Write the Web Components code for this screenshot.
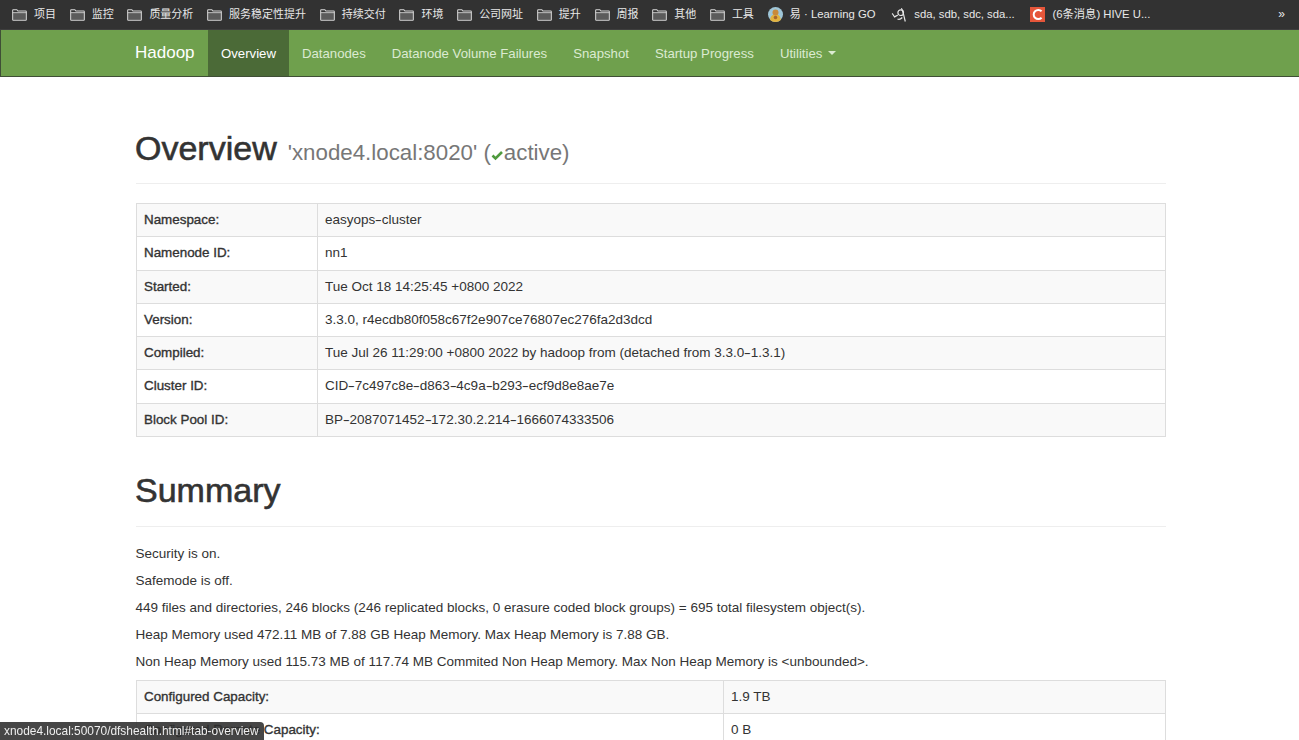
<!DOCTYPE html>
<html lang="en">
<head>
<meta charset="utf-8">
<title>Namenode information</title>
<style>
  html, body { margin: 0; height: 740px; overflow: hidden; background: #fff; }
  body { font: 13.5px/19px "Liberation Sans", "Noto Sans CJK SC", sans-serif; color: #333; }
</style>
</head>
<body>
<hd-bookmarks>
  <hd-bookmark>项目</hd-bookmark>
  <hd-bookmark>监控</hd-bookmark>
  <hd-bookmark>质量分析</hd-bookmark>
  <hd-bookmark>服务稳定性提升</hd-bookmark>
  <hd-bookmark>持续交付</hd-bookmark>
  <hd-bookmark>环境</hd-bookmark>
  <hd-bookmark>公司网址</hd-bookmark>
  <hd-bookmark>提升</hd-bookmark>
  <hd-bookmark>周报</hd-bookmark>
  <hd-bookmark>其他</hd-bookmark>
  <hd-bookmark>工具</hd-bookmark>
  <hd-bookmark icon="avatar">易 · Learning GO</hd-bookmark>
  <hd-bookmark icon="squiggle">sda, sdb, sdc, sda...</hd-bookmark>
  <hd-bookmark icon="csdn">(6条消息) HIVE U...</hd-bookmark>
</hd-bookmarks>
<hd-navbar brand="Hadoop">
  <hd-nav-item active>Overview</hd-nav-item>
  <hd-nav-item>Datanodes</hd-nav-item>
  <hd-nav-item>Datanode Volume Failures</hd-nav-item>
  <hd-nav-item>Snapshot</hd-nav-item>
  <hd-nav-item>Startup Progress</hd-nav-item>
  <hd-nav-item caret>Utilities</hd-nav-item>
</hd-navbar>
<hd-page>
  <hd-heading style="--top: 49px; --pad: 4px">Overview
    <span slot="sub">'xnode4.local:8020' (<hd-check></hd-check>active)</span>
  </hd-heading>
  <hd-kv-table col="181">
    <hd-kv name="Namespace:">easyops<i>-</i>cluster</hd-kv>
    <hd-kv name="Namenode ID:">nn1</hd-kv>
    <hd-kv name="Started:">Tue Oct 18 14:25:45 +0800 2022</hd-kv>
    <hd-kv name="Version:">3.3.0, r4ecdb80f058c67f2e907ce76807ec276fa2d3dcd</hd-kv>
    <hd-kv name="Compiled:">Tue Jul 26 11:29:00 +0800 2022 by hadoop from (detached from 3.3.0<i>-</i>1.3.1)</hd-kv>
    <hd-kv name="Cluster ID:">CID<i>-</i>7c497c8e<i>-</i>d863<i>-</i>4c9a<i>-</i>b293<i>-</i>ecf9d8e8ae7e</hd-kv>
    <hd-kv name="Block Pool ID:">BP<i>-</i>2087071452<i>-</i>172.30.2.214<i>-</i>1666074333506</hd-kv>
  </hd-kv-table>
  <hd-heading style="--top: 32px; --pad: 3px">Summary</hd-heading>
  <hd-line>Security is on.</hd-line>
  <hd-line>Safemode is off.</hd-line>
  <hd-line>449 files and directories, 246 blocks (246 replicated blocks, 0 erasure coded block groups) = 695 total filesystem object(s).</hd-line>
  <hd-line>Heap Memory used 472.11 MB of 7.88 GB Heap Memory. Max Heap Memory is 7.88 GB.</hd-line>
  <hd-line>Non Heap Memory used 115.73 MB of 117.74 MB Commited Non Heap Memory. Max Non Heap Memory is &lt;unbounded&gt;.</hd-line>
  <hd-kv-table col="587" style="margin-top: 5px">
    <hd-kv name="Configured Capacity:">1.9 TB</hd-kv>
    <hd-kv name="Configured Remote Capacity:">0 B</hd-kv>
  </hd-kv-table>
</hd-page>
<hd-status-tip>xnode4.local:50070/dfshealth.html#tab-overview</hd-status-tip>

<script>
// small helper, every element below just sets its shadow html once
class ShadowEl extends HTMLElement {
  constructor () {
    super();
    this.attachShadow({ mode: 'open' });
  }

  connectedCallback () {
    this.shadowRoot.innerHTML = this.html();
  }
}

const bookmarkIcons = {
  folder: `<svg width="15" height="12" viewBox="0 0 16 13" fill="none" stroke="#d8d8d8" stroke-width="1.100">
      <path d="M1 4.500h14v7H1z" fill="#777" stroke="none" opacity=".6"/>
      <path d="M.6 11.600V1.400c0-.4.3-.7.7-.7h3.800l1.200 1.500h8.400c.4 0 .7.3.7.7v8.700c0 .4-.3.7-.7.7H1.300c-.4 0-.7-.3-.7-.7z"/>
      <path d="M.6 4h14.800" stroke-width="1"/>
    </svg>`,
  avatar: `<svg width="15" height="15" viewBox="0 0 15 15">
      <circle cx="7.500" cy="7.500" r="7.500" fill="#9fc6d8"/>
      <path d="M2.200 13c.2-3.400 1.700-5.400 5.300-5.400s5.100 2 5.300 5.400c-1.400 1.300-3.200 2-5.300 2s-3.900-.7-5.300-2z" fill="#e2b23e"/>
      <circle cx="7.500" cy="5.500" r="3" fill="#c98a3a"/>
      <circle cx="7.500" cy="10.500" r="1.800" fill="#a8662c"/>
    </svg>`,
  squiggle: `<svg width="16" height="16" viewBox="0 0 16 16" fill="none" stroke="#e6e6e6" stroke-width="1.200">
      <path d="M1 6.500c1 .6 1.500 2 2.500 3.400.9-.6 2.400-1.200 3.300-1.900"/>
      <circle cx="9.700" cy="5.700" r="2.800"/>
      <path d="M10.400 1.200c2 3.500 2.500 8.500 3.900 13.300"/>
      <path d="M6.500 12c1.500.8 3.300.2 4.800-1.500"/>
    </svg>`,
  csdn: `<svg width="15" height="15" viewBox="0 0 15 15">
      <rect width="15" height="15" fill="#e5563a"/>
      <path d="M11.600 4.300A4.600 4.600 0 1 0 11.600 10.700" fill="none" stroke="#fff" stroke-width="2"/>
    </svg>`
};

class HdBookmarks extends ShadowEl {
  html () {
    return `<style>
        :host { display: flex; height: 30px; background: #323232; box-sizing: border-box;
          padding: 0 14px 0 12px; border-bottom: 1px solid #3e3e3e; color: #e8e8e8; }
        .list { display: flex; align-items: center; gap: 13.700px; flex: 1; }
        .more { align-self: center; font-size: 12px; }
      </style>
      <div class="list"><slot></slot></div>
      <span class="more">»</span>`;
  }
}

class HdBookmark extends ShadowEl {
  html () {
    const icon = bookmarkIcons[this.getAttribute('icon') || 'folder'];
    return `<style>
        :host { display: flex; align-items: center; gap: 7px; font-size: 11px; white-space: nowrap; }
        :host([icon]) { font-size: 11.300px; }
        :host([icon="squiggle"]), :host([icon="csdn"]) { margin-left: 2px; }
        svg { display: block; }
      </style>${icon}<slot></slot>`;
  }
}

class HdNavbar extends ShadowEl {
  html () {
    return `<style>
        :host { display: flex; height: 47px; background: #6fa04d; box-sizing: border-box;
          padding: 0 0 0 134px; border: 1px solid #3f4f36; border-width: 0 0 1px 1px; }
        .brand { font-size: 17px; line-height: 46px; color: #fff; width: 73px; }
        nav { display: flex; }
      </style>
      <div class="brand">${this.getAttribute('brand')}</div>
      <nav><slot></slot></nav>`;
  }
}

class HdNavItem extends ShadowEl {
  html () {
    return `<style>
        :host { display: flex; align-items: center; gap: 5px; padding: 0 13px; color: #dcebd2; font-size: 13.200px; }
        :host([active]) { background: #4b6a37; color: #fff; }
        .caret { border: 4px solid transparent; border-top-color: #dcebd2; border-bottom: 0; margin-left: 1px; }
      </style><slot></slot>${this.hasAttribute('caret') ? '<span class="caret"></span>' : ''}`;
  }
}

class HdPage extends ShadowEl {
  html () {
    return `<style>
        :host { display: block; padding: 0 133px 0 136px; }
      </style><slot></slot>`;
  }
}

class HdHeading extends ShadowEl {
  html () {
    return `<style>
        :host { display: flex; align-items: baseline; gap: 11px; box-sizing: border-box;
          margin-top: var(--top); height: 58px; padding-top: var(--pad); border-bottom: 1px solid #eee;
          font-size: 34px; line-height: 36px; color: #333; -webkit-text-stroke: .6px #333; text-indent: -1px; }
        ::slotted(span) { font-size: 22.300px; font-weight: 400; color: #777; -webkit-text-stroke: 0; text-indent: 0; }
      </style><slot></slot><slot name="sub"></slot>`;
  }
}

class HdCheck extends ShadowEl {
  html () {
    return `<style>
        :host { display: inline-block; width: 13px; height: 11px; vertical-align: -1px; }
        svg { display: block; }
      </style>
      <svg width="13" height="11" viewBox="0 0 13 11" fill="none" stroke="#4f9a3e" stroke-width="2.600">
        <path d="M1.500 5.500l3 3 6.500-6.500"/>
      </svg>`;
  }
}

class HdKvTable extends ShadowEl {
  html () {
    return `<style>
        :host { display: block; margin-top: 19px; border: 1px solid #ddd; border-bottom: 0; --col: ${this.getAttribute('col')}px; }
      </style><slot></slot>`;
  }
}

class HdKv extends ShadowEl {
  html () {
    return `<style>
        :host { display: grid; grid-template-columns: var(--col) 1fr; height: 33.300px; box-sizing: border-box;
          border-bottom: 1px solid #ddd; }
        :host(:nth-child(odd)) { background: #f9f9f9; }
        b { font-weight: 400; font-size: 13.400px; -webkit-text-stroke: .35px #333; border-right: 1px solid #ddd; }
        b, div { padding: 0 7px; display: block; line-height: 32px; white-space: nowrap; }
        ::slotted(i) { display: inline-block; width: 6.500px; font-style: normal; text-align: center; transform: scaleX(1.600); }
      </style><b>${this.getAttribute('name')}</b><div><slot></slot></div>`;
  }
}

class HdLine extends ShadowEl {
  html () {
    return `<style>
        :host { display: block; height: 27px; line-height: 27px; white-space: nowrap; margin-left: -.5px; }
        :host(:first-of-type) { margin-top: 13px; }
      </style><slot></slot>`;
  }
}

class HdStatusTip extends ShadowEl {
  html () {
    return `<style>
        :host { position: fixed; left: 0; bottom: 0; height: 18px; box-sizing: border-box; padding: 0 5px 0 4px;
          background: rgba(44, 44, 44, .88); color: #efefef; font-size: 11.900px; line-height: 19px;
          border-top-right-radius: 4px; white-space: nowrap; }
      </style><slot></slot>`;
  }
}

customElements.define('hd-bookmarks', HdBookmarks);
customElements.define('hd-bookmark', HdBookmark);
customElements.define('hd-navbar', HdNavbar);
customElements.define('hd-nav-item', HdNavItem);
customElements.define('hd-page', HdPage);
customElements.define('hd-heading', HdHeading);
customElements.define('hd-check', HdCheck);
customElements.define('hd-kv-table', HdKvTable);
customElements.define('hd-kv', HdKv);
customElements.define('hd-line', HdLine);
customElements.define('hd-status-tip', HdStatusTip);
</script>
</body>
</html>
